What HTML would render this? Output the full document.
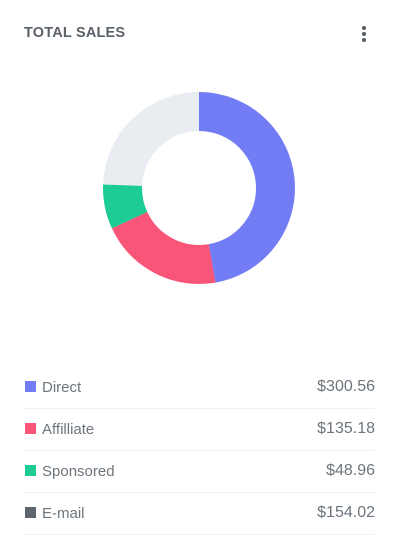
<!DOCTYPE html>
<html><head><meta charset="utf-8"><style>
html,body{margin:0;padding:0;background:#fff;width:400px;height:559px;overflow:hidden;font-family:"Liberation Sans",sans-serif}
.title{position:absolute;left:24px;top:25px;font-size:14.5px;font-weight:bold;color:#5a6169;letter-spacing:0.2px}
.dots{position:absolute;left:362px;top:26px;width:4px}
.dots i{display:block;width:4px;height:4px;border-radius:50%;background:#555c63;margin-bottom:2px}
svg{position:absolute;left:0;top:0}
.row{position:absolute;left:24px;width:351px;height:42px;border-bottom:1px solid #eef0f2;font-size:15px;color:#6c757d}
.row .sq{position:absolute;left:1px;top:15px;width:11px;height:11px}
.row .l{position:absolute;left:18px;top:13px}
.row .r{position:absolute;right:0;top:12px;font-size:16px}
</style></head><body>
<div class="title">TOTAL SALES</div>
<div class="dots"><i></i><i></i><i></i></div>
<svg width="400" height="400">
<g transform="rotate(-90 199 188)" fill="none" stroke-width="39">
<circle cx="199" cy="188" r="76.5" stroke="#e9edf1" stroke-dasharray="117.5 363.2" stroke-dashoffset="-363.2"/>
<circle cx="199" cy="188" r="76.5" stroke="#1ccc94" stroke-dasharray="36.1 444.6" stroke-dashoffset="-327.1"/>
<circle cx="199" cy="188" r="76.5" stroke="#f85578" stroke-dasharray="100.1 380.6" stroke-dashoffset="-227"/>
<circle cx="199" cy="188" r="76.5" stroke="#727cf5" stroke-dasharray="227 253.7" stroke-dashoffset="0"/>
</g>
</svg>
<div class="row" style="top:366px"><span class="sq" style="background:#727cf5"></span><span class="l">Direct</span><span class="r">$300.56</span></div>
<div class="row" style="top:408px"><span class="sq" style="background:#f85578"></span><span class="l">Affilliate</span><span class="r">$135.18</span></div>
<div class="row" style="top:450px"><span class="sq" style="background:#1ccc94"></span><span class="l">Sponsored</span><span class="r">$48.96</span></div>
<div class="row" style="top:492px"><span class="sq" style="background:#5d666f"></span><span class="l">E-mail</span><span class="r">$154.02</span></div>
</body></html>
